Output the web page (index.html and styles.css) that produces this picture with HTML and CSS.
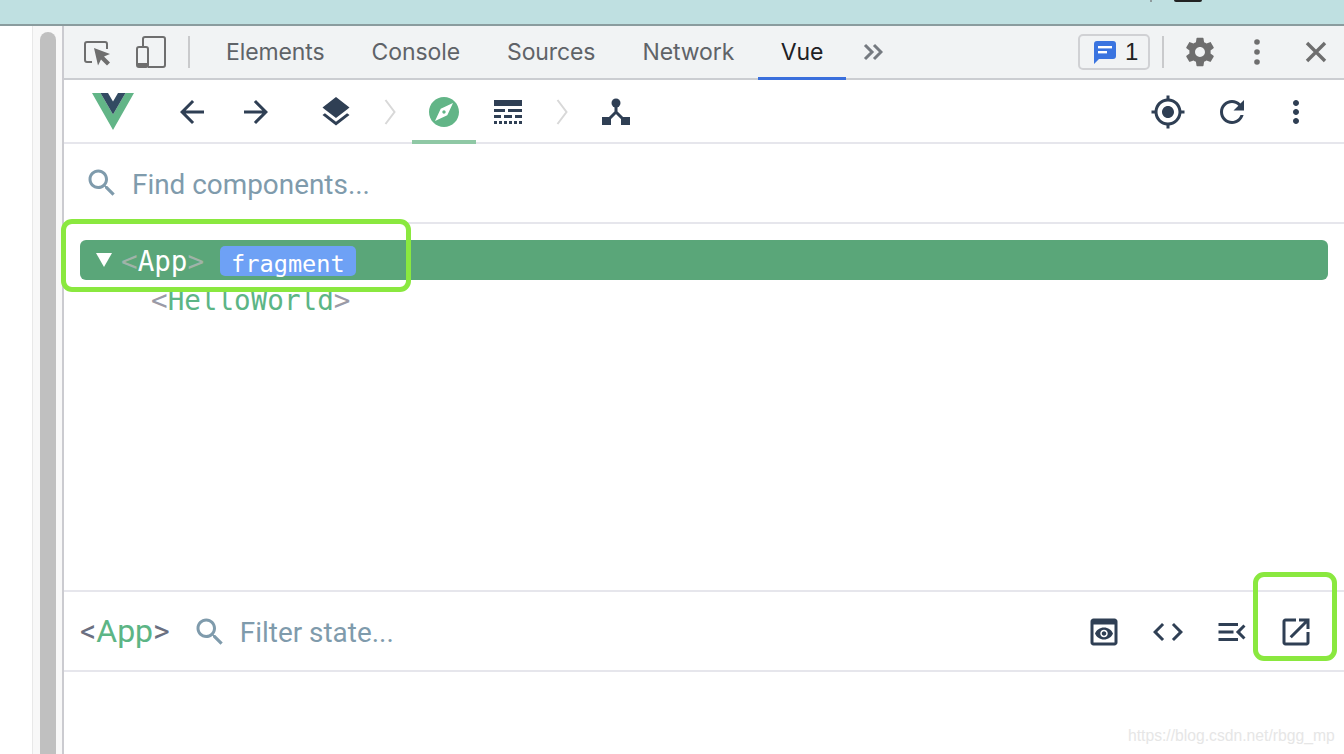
FILE: index.html
```html
<!DOCTYPE html>
<html lang="en">
<head>
<meta charset="utf-8">
<title>Vue DevTools</title>
<link rel="stylesheet" href="styles.css">
</head>
<body>
<div class="screen">
  <div class="band"><i class="band-tick"></i><i class="band-mark"></i></div>
  <div class="main">
    <div class="gutter"></div>
    <div class="track"><div class="thumb"></div></div>
    <div class="devtools">
      <div class="tabbar">
        <svg class="dt-inspect" viewBox="0 0 28 28"><path class="dt-line" d="M9 23H4a2 2 0 0 1-2-2V5a2 2 0 0 1 2-2h18a2 2 0 0 1 2 2v5"/><path class="dt-fill" d="M11 9l16 6-6 2.5 6 6-3 3-6-6-3 6z"/></svg>
        <svg class="dt-device" viewBox="0 0 32 34"><path class="dt-line" d="M8 11V4a2 2 0 0 1 2-2h18a2 2 0 0 1 2 2v26a2 2 0 0 1-2 2H13"/><rect class="dt-line" x="2" y="12" width="11" height="20" rx="2"/><path class="dt-line-wide" d="M2 30h11"/></svg>
        <span class="vsep"></span>
        <span class="tab">Elements</span>
        <span class="tab">Console</span>
        <span class="tab">Sources</span>
        <span class="tab">Network</span>
        <span class="tab tab-on">Vue</span>
        <svg class="dt-more" viewBox="0 0 20 18"><path d="M2 2l7 7-7 7M11 2l7 7-7 7"/></svg>
        <div class="tab-right">
          <span class="badge">
            <svg class="badge-icon" viewBox="0 0 24 24"><path d="M4 1h16a3 3 0 0 1 3 3v12a3 3 0 0 1-3 3H6l-5 5V4a3 3 0 0 1 3-3z"/><rect class="badge-line" x="5" y="6" width="14" height="2.4"/><rect class="badge-line" x="5" y="11" width="9" height="2.4"/></svg>
            <span class="badge-num">1</span>
          </span>
          <span class="vsep vsep-right"></span>
          <svg class="dt-gear" viewBox="0 0 24 24"><path d="M19.43 12.98c.04-.32.07-.64.07-.98s-.03-.66-.07-.98l2.11-1.65c.19-.15.24-.42.12-.64l-2-3.46c-.12-.22-.39-.3-.61-.22l-2.49 1c-.52-.4-1.08-.73-1.69-.98l-.38-2.65C14.46 2.18 14.25 2 14 2h-4c-.25 0-.46.18-.49.42l-.38 2.65c-.61.25-1.17.59-1.69.98l-2.49-1c-.23-.09-.49 0-.61.22l-2 3.46c-.13.22-.07.49.12.64l2.11 1.65c-.04.32-.07.65-.07.98s.03.66.07.98l-2.11 1.65c-.19.15-.24.42-.12.64l2 3.46c.12.22.39.3.61.22l2.49-1c.52.4 1.08.73 1.69.98l.38 2.65c.03.24.24.42.49.42h4c.25 0 .46-.18.49-.42l.38-2.65c.61-.25 1.17-.59 1.69-.98l2.49 1c.23.09.49 0 .61-.22l2-3.46c.12-.22.07-.49-.12-.64l-2.11-1.65zM12 15.5c-1.93 0-3.5-1.57-3.5-3.5s1.57-3.5 3.5-3.5 3.5 1.57 3.5 3.5-1.57 3.5-3.5 3.5z"/></svg>
          <svg class="dt-dots" viewBox="0 0 8 28"><circle cx="4" cy="4" r="2.8"/><circle cx="4" cy="14" r="2.8"/><circle cx="4" cy="24" r="2.8"/></svg>
          <svg class="dt-close" viewBox="0 0 22 22"><path d="M2 2l18 18M20 2L2 20"/></svg>
        </div>
      </div>

      <div class="toolbar">
        <div class="slot-logo">
          <svg class="logo" viewBox="0 0 42 37"><path class="logo-g" d="M0 0H8.5L21 21.5 33.5 0H42L21 37z"/><path class="logo-d" d="M8.5 0H16L21 8.5 26 0H33.5L21 21.5z"/></svg>
        </div>
        <span class="slot"><svg class="ico" viewBox="0 0 24 24"><path d="M20 11H7.83l5.59-5.59L12 4l-8 8 8 8 1.41-1.41L7.83 13H20v-2z"/></svg></span>
        <span class="slot"><svg class="ico" viewBox="0 0 24 24"><path d="M4 11h12.17l-5.59-5.59L12 4l8 8-8 8-1.41-1.41L16.17 13H4v-2z"/></svg></span>
        <span class="slot slot-gap"><svg class="ico" viewBox="0 0 24 24"><path d="M11.99 18.54l-7.37-5.73L3 14.07l9 7 9-7-1.63-1.27-7.38 5.74zM12 16l7.36-5.73L21 9l-9-7-9 7 1.63 1.27L12 16z"/></svg></span>
        <span class="slot-chev"><svg class="chev" viewBox="0 0 12 26"><path d="M1.5 1l9 12-9 12"/></svg></span>
        <span class="slot slot-on"><svg class="ico ico-green" viewBox="0 0 24 24"><path d="M12 10.9c-.61 0-1.1.49-1.1 1.1s.49 1.1 1.1 1.1c.61 0 1.1-.49 1.1-1.1s-.49-1.1-1.1-1.1zM12 2C6.48 2 2 6.48 2 12s4.48 10 10 10 10-4.48 10-10S17.52 2 12 2zm2.19 12.19L6 18l3.81-8.19L18 6l-3.81 8.19z"/></svg></span>
        <span class="slot"><svg class="ico-table" viewBox="0 0 28 24"><rect x="0" y="0" width="28" height="6"/><rect x="0" y="9" width="11" height="3"/><rect x="14" y="9" width="14" height="3"/><rect x="0" y="15" width="7" height="3"/><rect x="10" y="15" width="8" height="3"/><rect x="21" y="15" width="7" height="3"/><rect x="0" y="21" width="3" height="3"/><rect x="5" y="21" width="3" height="3"/><rect x="10" y="21" width="3" height="3"/><rect x="15" y="21" width="3" height="3"/><rect x="20" y="21" width="3" height="3"/><rect x="25" y="21" width="3" height="3"/></svg></span>
        <span class="slot-chev"><svg class="chev" viewBox="0 0 12 26"><path d="M1.5 1l9 12-9 12"/></svg></span>
        <span class="slot"><svg class="ico-tree" viewBox="0 0 28 28"><circle cx="14" cy="5" r="4.5"/><path class="tree-line" d="M14 7v8M14 14L7 21M14 14l7 7"/><rect x="0" y="19" width="9" height="8"/><rect x="19" y="19" width="9" height="8"/></svg></span>
        <div class="toolbar-right">
          <span class="slot"><svg class="ico" viewBox="0 0 24 24"><path d="M12 8c-2.21 0-4 1.79-4 4s1.79 4 4 4 4-1.79 4-4-1.79-4-4-4zm8.94 3c-.46-4.17-3.77-7.48-7.94-7.94V1h-2v2.06C6.83 3.52 3.52 6.83 3.06 11H1v2h2.06c.46 4.17 3.77 7.48 7.94 7.94V23h2v-2.06c4.17-.46 7.48-3.77 7.94-7.94H23v-2h-2.06zM12 19c-3.87 0-7-3.13-7-7s3.13-7 7-7 7 3.13 7 7-3.13 7-7 7z"/></svg></span>
          <span class="slot"><svg class="ico" viewBox="0 0 24 24"><path d="M17.65 6.35C16.2 4.9 14.21 4 12 4c-4.42 0-7.99 3.58-7.99 8s3.57 8 7.99 8c3.73 0 6.84-2.55 7.73-6h-2.08c-.82 2.33-3.04 4-5.65 4-3.31 0-6-2.69-6-6s2.69-6 6-6c1.66 0 3.14.69 4.22 1.78L13 11h7V4l-2.35 2.35z"/></svg></span>
          <span class="slot"><svg class="ico" viewBox="0 0 24 24"><path d="M12 8c1.1 0 2-.9 2-2s-.9-2-2-2-2 .9-2 2 .9 2 2 2zm0 2c-1.1 0-2 .9-2 2s.9 2 2 2 2-.9 2-2-.9-2-2-2zm0 6c-1.1 0-2 .9-2 2s.9 2 2 2 2-.9 2-2-.9-2-2-2z"/></svg></span>
        </div>
      </div>

      <div class="search">
        <svg class="ico ico-search" viewBox="0 0 24 24"><path d="M15.5 14h-.79l-.28-.27C15.41 12.59 16 11.11 16 9.5 16 5.91 13.09 3 9.5 3S3 5.91 3 9.5 5.91 16 9.5 16c1.61 0 3.09-.59 4.23-1.57l.27.28v.79l5 4.99L20.49 19l-4.99-5zm-6 0C7.01 14 5 11.99 5 9.5S7.01 5 9.5 5 14 7.01 14 9.5 11.99 14 9.5 14z"/></svg>
        <span class="placeholder">Find components...</span>
      </div>

      <div class="tree">
        <div class="row row-on">
          <i class="caret"></i>
          <span class="mono"><span class="ang-on">&lt;</span>App<span class="ang-on">&gt;</span></span>
          <span class="frag">fragment</span>
        </div>
        <div class="row row-child">
          <span class="mono mono-child"><span class="ang">&lt;</span><span class="name">HelloWorld</span><span class="ang">&gt;</span></span>
        </div>
      </div>

      <div class="statebar">
        <span class="crumb"><span class="crumb-ang">&lt;</span><span class="crumb-name">App</span><span class="crumb-ang">&gt;</span></span>
        <svg class="ico ico-search ico-filter" viewBox="0 0 24 24"><path d="M15.5 14h-.79l-.28-.27C15.41 12.59 16 11.11 16 9.5 16 5.91 13.09 3 9.5 3S3 5.91 3 9.5 5.91 16 9.5 16c1.61 0 3.09-.59 4.23-1.57l.27.28v.79l5 4.99L20.49 19l-4.99-5zm-6 0C7.01 14 5 11.99 5 9.5S7.01 5 9.5 5 14 7.01 14 9.5 11.99 14 9.5 14z"/></svg>
        <span class="placeholder">Filter state...</span>
        <div class="toolbar-right state-actions">
          <span class="slot"><svg class="ico" viewBox="0 0 24 24"><path d="M19 3H5c-1.11 0-2 .9-2 2v14c0 1.1.89 2 2 2h14c1.1 0 2-.9 2-2V5c0-1.1-.9-2-2-2zm0 16H5V7h14v12zm-5.5-6c0 .83-.67 1.5-1.5 1.5s-1.5-.67-1.5-1.5.67-1.5 1.5-1.5 1.5.67 1.5 1.5zM12 9c-2.73 0-5.06 1.66-6 4 .94 2.34 3.27 4 6 4s5.06-1.66 6-4c-.94-2.34-3.27-4-6-4zm0 6.5c-1.38 0-2.5-1.12-2.5-2.5s1.12-2.5 2.5-2.5 2.5 1.12 2.5 2.5-1.12 2.5-2.5 2.5z"/></svg></span>
          <span class="slot"><svg class="ico" viewBox="0 0 24 24"><path d="M9.4 16.6L4.8 12l4.6-4.6L8 6l-6 6 6 6 1.4-1.4zm5.2 0l4.6-4.6-4.6-4.6L16 6l6 6-6 6-1.4-1.4z"/></svg></span>
          <span class="slot"><svg class="ico" viewBox="0 0 24 24"><path d="M3 18h13v-2H3v2zm0-5h10v-2H3v2zm0-7v2h13V6H3zm18 9.59L17.42 12 21 8.41 19.59 7l-5 5 5 5L21 15.59z"/></svg></span>
          <span class="slot"><svg class="ico" viewBox="0 0 24 24"><path d="M19 19H5V5h7V3H5c-1.11 0-2 .9-2 2v14c0 1.1.89 2 2 2h14c1.1 0 2-.9 2-2v-7h-2v7zM14 3v2h3.59l-9.83 9.83 1.41 1.41L19 6.41V10h2V3h-7z"/></svg></span>
        </div>
      </div>
      <div class="state-body"></div>
    </div>
  </div>
  <div class="hl hl-row"></div>
  <div class="hl hl-open"></div>
  <div class="watermark">https://blog.csdn.net/rbgg_mp</div>
</div>
</body>
</html>
```
FILE: styles.css
```css
* { box-sizing: border-box; }
html, body { margin: 0; padding: 0; background: #fff; }
.screen {
  position: relative;
  display: flex;
  flex-direction: column;
  width: 1344px;
  height: 754px;
  overflow: hidden;
  font-family: "Liberation Sans", Arial, sans-serif;
}
.band {
  position: relative;
  flex: 0 0 26px;
  background: #bfe0e1;
  border-bottom: 2px solid #8a9c9e;
}
.band-tick { position: absolute; left: 1150px; top: 0; width: 2px; height: 2px; background: #8f9c9e; }
.band-mark { position: absolute; left: 1174px; top: 0; width: 28px; height: 2px; background: #222; border-radius: 0 0 2px 2px; }
.main { flex: 1; display: flex; min-height: 0; }
.gutter { flex: 0 0 33px; background: #fff; border-right: 1px solid #e8e8e8; }
.track { flex: 0 0 29px; background: #f8f8f8; padding: 6px 6px 0 7px; }
.thumb { height: 100%; background: #c0c0c0; border-radius: 8px 8px 0 0; }
.devtools {
  flex: 1;
  min-width: 0;
  display: flex;
  flex-direction: column;
  background: #fff;
  border-left: 2px solid #cbcbd0;
}

/* Chrome tab strip */
.tabbar {
  flex: 0 0 54px;
  display: flex;
  align-items: center;
  background: #f1f3f4;
  border-bottom: 2px solid #cbcdd1;
  padding-left: 19px;
}
.dt-inspect { width: 28px; height: 28px; margin-right: 24px; margin-top: 2px; }
.dt-device { width: 32px; height: 34px; }
.dt-line { fill: none; stroke: #6e6e6e; stroke-width: 2; }
.dt-line-wide { fill: none; stroke: #6e6e6e; stroke-width: 4; }
.dt-fill { fill: #6e6e6e; }
.vsep { flex: 0 0 2px; height: 32px; background: #c9cacc; margin-left: 21px; margin-right: 12.5px; }
.tab {
  position: relative;
  height: 52px;
  line-height: 52px;
  padding: 0 23.5px;
  font-family: Inter, "Liberation Sans", sans-serif;
  font-size: 23px;
  letter-spacing: -0.1px;
  color: #5f6368;
}
.tab-on { color: #202124; padding: 0 23px; }
.tab-on::after {
  content: "";
  position: absolute;
  left: 0;
  right: 0;
  bottom: -2px;
  height: 3px;
  background: #3a6fdc;
}
.dt-more { width: 20px; height: 18px; margin-left: 17px; fill: none; stroke: #757a80; stroke-width: 3; }
.tab-right { margin-left: auto; display: flex; align-items: center; }
.badge {
  display: flex;
  align-items: center;
  width: 72px;
  height: 36px;
  border: 2px solid #d0d1d4;
  border-radius: 5px;
  padding-left: 13px;
}
.badge-icon { width: 24px; height: 24px; fill: #3a74e0; }
.badge-line { fill: #fff; }
.badge-num { font-size: 24px; color: #222; margin-left: 8px; }
.vsep-right { margin-left: 12px; margin-right: 19px; }
.dt-gear { width: 34px; height: 34px; fill: #6e6e6e; margin-right: 36px; }
.dt-dots { width: 8px; height: 28px; fill: #6e6e6e; margin-right: 44px; }
.dt-close { width: 22px; height: 22px; fill: none; stroke: #6e6e6e; stroke-width: 3.4; margin-right: 17px; }

/* Vue toolbar */
.toolbar {
  flex: 0 0 64px;
  display: flex;
  align-items: stretch;
  border-bottom: 2px solid #e6e6ec;
  padding-top: 2px;
}
.slot-logo { flex: 0 0 96px; display: flex; align-items: center; justify-content: center; padding: 0 0 2px 2px; }
.logo { width: 42px; height: 37px; }
.logo-g { fill: #62b587; }
.logo-d { fill: #324a62; }
.slot { flex: 0 0 64px; display: flex; align-items: center; justify-content: center; }
.slot-gap { margin-left: 16px; }
.slot-chev { flex: 0 0 44px; display: flex; align-items: center; justify-content: center; }
.slot-on { position: relative; }
.slot-on::after {
  content: "";
  position: absolute;
  left: 0;
  right: 0;
  bottom: -2px;
  height: 4px;
  background: #8fc8a5;
}
.ico { width: 36px; height: 36px; fill: #2f3f54; flex: none; }
.ico-green { fill: #62b587; }
.chev { width: 12px; height: 26px; fill: none; stroke: #d8d8d8; stroke-width: 2; }
.ico-table { width: 28px; height: 24px; fill: #2f3f54; }
.ico-tree { width: 28px; height: 28px; fill: #2f3f54; }
.tree-line { fill: none; stroke: #2f3f54; stroke-width: 3; }
.toolbar-right { margin-left: auto; display: flex; align-items: center; padding-right: 16px; }
.state-actions { margin-top: 2px; }

/* Search */
.search {
  flex: 0 0 80px;
  display: flex;
  align-items: center;
  border-bottom: 2px solid #e6e6ec;
  padding-left: 20px;
}
.ico-search { fill: #7f9bac; margin-right: 12px; }
.ico-filter { margin-top: 2px; }
.placeholder { font-family: Roboto, sans-serif; font-size: 27.9px; color: #7f9bac; margin-top: 3px; }

/* Tree */
.tree { flex: 1; padding: 16px 16px 0; min-height: 0; }
.row { height: 40px; display: flex; align-items: center; }
.row-on { background: #5aa679; border-radius: 6px; color: #fff; padding-left: 16px; }
.row-child { padding-left: 71px; }
.caret {
  flex: none;
  width: 0;
  height: 0;
  border-left: 8px solid transparent;
  border-right: 8px solid transparent;
  border-top: 14px solid #fff;
  margin-right: 9px;
}
.mono { font-family: "DejaVu Sans Mono", monospace; font-size: 27.6px; line-height: 40px; padding-top: 4px; }
.mono-child { padding-top: 2px; }
.ang-on { color: #9fb3a8; }
.ang { color: #9a9aa6; }
.name { color: #5cb585; }
.frag {
  margin-left: 16px;
  margin-top: 2px;
  height: 30px;
  line-height: 36px;
  padding: 0 11px;
  background: #6ea1f5;
  border-radius: 5px;
  font-family: "DejaVu Sans Mono", monospace;
  font-size: 23.6px;
  color: #fff;
}

/* State bar */
.statebar {
  flex: 0 0 82px;
  display: flex;
  align-items: center;
  border-top: 2px solid #e6e6ec;
  border-bottom: 2px solid #e6e6ec;
  padding-left: 16px;
}
.crumb { font-family: Roboto, sans-serif; font-size: 32px; margin-right: 22px; }
.crumb-ang { color: #6a6f80; }
.crumb-name { color: #5cb585; }
.state-body { flex: 0 0 82px; }

/* Annotations */
.hl { position: absolute; border: 5px solid #8ae83f; border-radius: 11px; }
.hl-row { left: 61px; top: 219px; width: 350px; height: 73px; }
.hl-open { left: 1253px; top: 572px; width: 84px; height: 89px; }
.watermark { position: absolute; left: 1128px; top: 727px; font-size: 15.7px; color: #e6e6e6; white-space: nowrap; }
```
